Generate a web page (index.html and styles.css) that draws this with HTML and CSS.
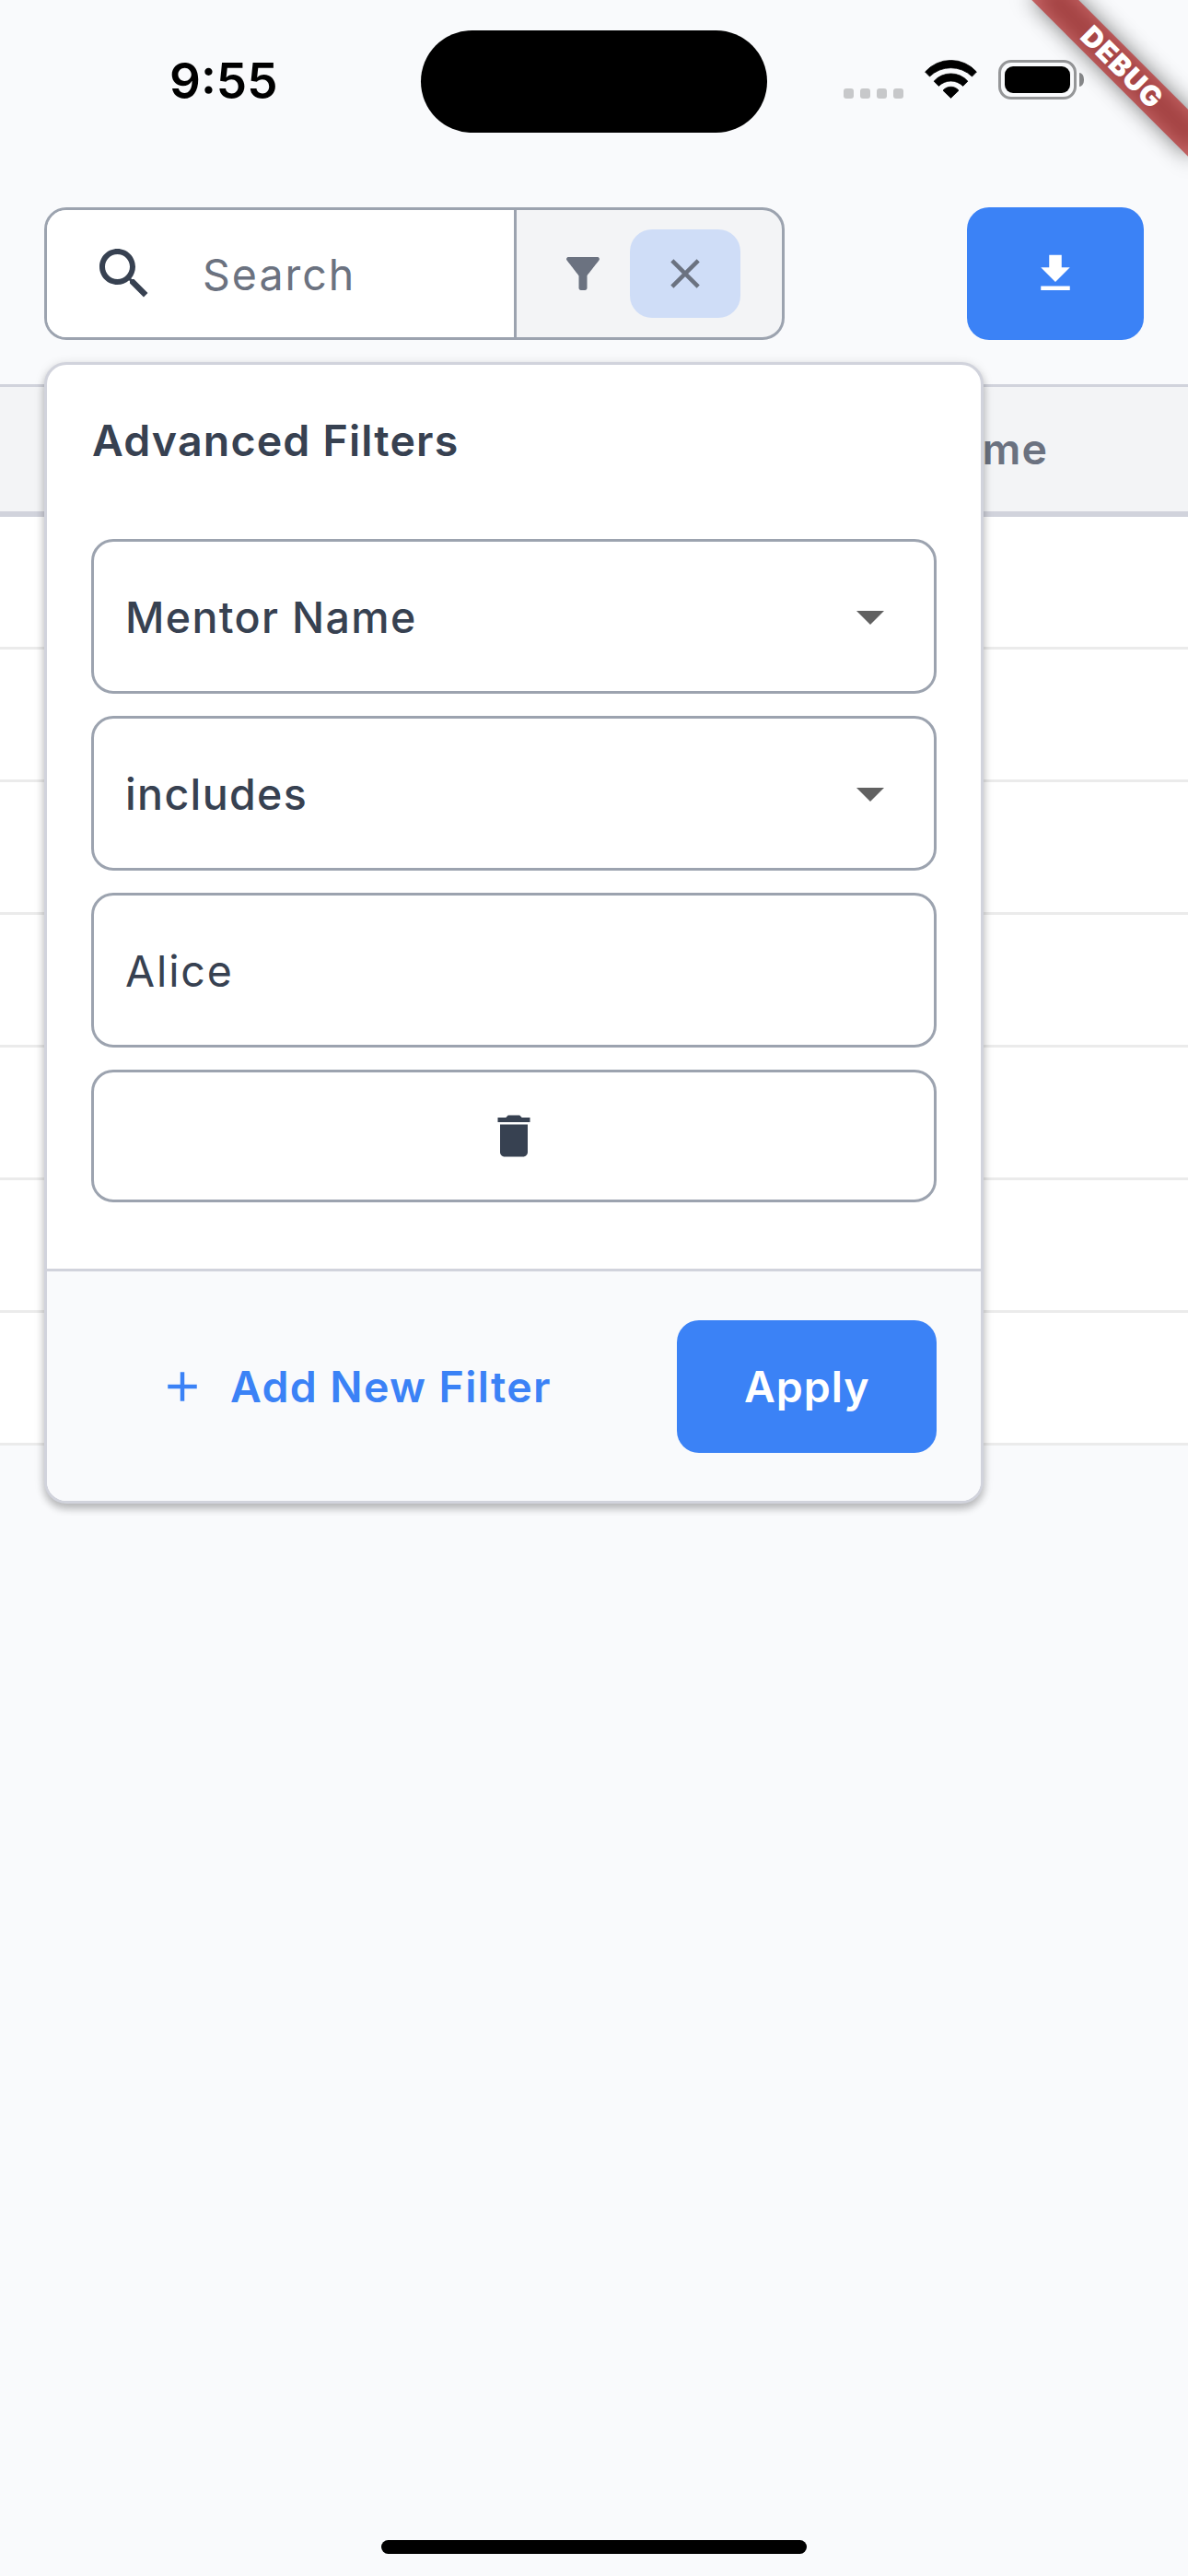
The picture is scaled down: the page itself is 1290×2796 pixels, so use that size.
FILE: index.html
```
<!DOCTYPE html>
<html lang="en">
<head>
<meta charset="utf-8">
<title>Mentors</title>
<link rel="stylesheet" href="styles.css">
</head>
<body>
<div class="screen">
  <header class="status-bar">
    <div class="clock">9:55</div>
    <div class="island"></div>
    <div class="indicators">
      <div class="signal"><i></i><i></i><i></i><i></i></div>
      <svg class="wifi" viewBox="0 0 57 42">
        <path d="M.6 13A37.3 37.3 0 0 1 56.4 13L51.5 18A33 33 0 0 0 5.5 18Z"/>
        <path d="M10.1 23.2A24.6 24.6 0 0 1 46.9 23.2L41.7 28.4A18.8 18.8 0 0 0 15.3 28.4Z"/>
        <path d="M20 33.2A11.1 11.1 0 0 1 37 33.2L28.5 41.4Z"/>
      </svg>
      <div class="battery"><div class="battery-case"><div class="battery-fill"></div></div><div class="battery-tip"></div></div>
    </div>
  </header>

  <div class="toolbar">
    <div class="search">
      <div class="search-input">
        <svg class="icon-lg" viewBox="0 0 24 24"><path d="M15.5 14h-.79l-.28-.27C15.41 12.59 16 11.11 16 9.5 16 5.91 13.09 3 9.5 3S3 5.91 3 9.5 5.91 16 9.5 16c1.61 0 3.09-.59 4.23-1.57l.27.28v.79l5 4.99L20.49 19l-4.99-5zm-6 0C7.01 14 5 11.99 5 9.5S7.01 5 9.5 5 14 7.01 14 9.5 11.99 14 9.5 14z"/></svg>
        <span class="placeholder">Search</span>
      </div>
      <div class="search-actions">
        <svg class="icon-md" viewBox="0 0 24 24"><path d="M4.25 5.61C6.27 8.2 10 13 10 13v6c0 .55.45 1 1 1h2c.55 0 1-.45 1-1v-6s3.72-4.8 5.74-7.39C20.25 4.95 19.78 4 18.95 4H5.04c-.83 0-1.3.95-.79 1.61z"/></svg>
        <div class="clear-chip">
          <svg class="icon-md" viewBox="0 0 24 24"><path d="M19 6.41L17.59 5 12 10.59 6.41 5 5 6.41 10.59 12 5 17.59 6.41 19 12 13.41 17.59 19 19 17.59 13.41 12z"/></svg>
        </div>
      </div>
    </div>
    <div class="download">
      <svg class="icon-md" viewBox="0 0 24 24"><path d="M19 9h-4V3H9v6H5l7 7 7-7zM5 18v2h14v-2H5z"/></svg>
    </div>
  </div>

  <div class="table">
    <div class="table-head">me</div>
    <div class="row"></div>
    <div class="row"></div>
    <div class="row"></div>
    <div class="row"></div>
    <div class="row"></div>
    <div class="row"></div>
    <div class="row"></div>
  </div>

  <section class="filters">
    <div class="filters-body">
      <h2 class="filters-title">Advanced Filters</h2>
      <div class="field">
        <span class="value">Mentor Name</span>
        <svg class="icon-lg caret" viewBox="0 0 24 24"><path d="M7 10l5 5 5-5z"/></svg>
      </div>
      <div class="field">
        <span class="value">includes</span>
        <svg class="icon-lg caret" viewBox="0 0 24 24"><path d="M7 10l5 5 5-5z"/></svg>
      </div>
      <div class="field">
        <span class="value value-text">Alice</span>
      </div>
      <div class="field field-delete">
        <svg class="icon-trash" viewBox="0 0 24 24"><path d="M6 19c0 1.1.9 2 2 2h8c1.1 0 2-.9 2-2V7H6v12zM19 4h-3.5l-1-1h-5l-1 1H5v2h14V4z"/></svg>
      </div>
    </div>
    <div class="filters-footer">
      <div class="add">
        <svg class="icon-md" viewBox="0 0 24 24"><path d="M19 13h-6v6h-2v-6H5v-2h6V5h2v6h6v2z"/></svg>
        <span>Add New Filter</span>
      </div>
      <div class="apply">Apply</div>
    </div>
  </section>

  <div class="ribbon"><div class="ribbon-band">DEBUG</div></div>
  <div class="home-indicator"></div>
</div>
</body>
</html>
```
FILE: styles.css
```
* { box-sizing: border-box; }

body {
  margin: 0;
  background: #f9fafb;
}

.screen {
  position: relative;
  display: flex;
  flex-direction: column;
  width: 1290px;
  height: 2796px;
  overflow: hidden;
  background: #f9fafc;
  color: #374151;
  font-family: Inter, "Liberation Sans", sans-serif;
  font-size: 46.5px;
  line-height: 60px;
}

svg { display: block; flex: none; fill: currentColor; }
.icon-lg { width: 72px; height: 72px; }
.icon-md { width: 54px; height: 54px; }
.icon-trash { width: 60px; height: 60px; }

/* Status bar */
.status-bar {
  display: grid;
  grid-template-columns: 457px 376px 457px;
  height: 177px;
  padding-top: 33px;
  color: #000;
}

.clock {
  padding-left: 184px;
  font-size: 53px;
  font-weight: 600;
  line-height: 111px;
}

.island {
  height: 111px;
  border-radius: 56px;
  background: #000;
}

.indicators {
  display: flex;
  height: 43px;
  margin-top: 32px;
  padding-left: 83px;
}

.signal {
  display: flex;
  gap: 7px;
  align-items: flex-end;
  width: 88px;
  height: 42px;
}

.signal i {
  width: 11px;
  height: 11px;
  border-radius: 3px;
  background: #c7c8ca;
}

.wifi { width: 57px; height: 42px; margin-right: 23px; }
.wifi path { stroke: #000; stroke-width: .8; stroke-linejoin: round; }

.battery { display: flex; gap: 3px; align-items: center; }

.battery-case {
  width: 85px;
  height: 43px;
  padding: 4px;
  border: 3px solid #959698;
  border-radius: 14px;
}

.battery-fill { height: 29px; border-radius: 9px; background: #000; }

.battery-tip {
  width: 5px;
  height: 15px;
  border-radius: 0 5px 5px 0 / 0 7px 7px 0;
  background: #868789;
}

/* Search and actions */
.toolbar {
  display: flex;
  justify-content: space-between;
  padding: 48px;
}

.search {
  display: flex;
  width: 804px;
  height: 144px;
  border: 3px solid #9ca3af;
  border-radius: 24px;
  overflow: hidden;
  background: #f3f4f6;
}

.search-input {
  display: flex;
  align-items: center;
  width: 510px;
  padding-left: 48px;
  border-right: 3px solid #9ca3af;
  background: #fff;
}

.placeholder {
  padding: 2px 0 0 49px;
  color: #6b7280;
  letter-spacing: 2px;
}

.search-actions {
  display: flex;
  flex: 1;
  align-items: center;
  gap: 24px;
  padding-left: 45px;
  color: #6b7280;
}

.clear-chip {
  display: flex;
  align-items: center;
  justify-content: center;
  width: 120px;
  height: 96px;
  border-radius: 24px;
  background: #cfddf7;
}

.download {
  display: flex;
  align-items: center;
  justify-content: center;
  width: 192px;
  height: 144px;
  border-radius: 24px;
  background: #3b82f6;
  color: #fff;
}

/* Table */
.table-head {
  height: 144px;
  padding-left: 1066.5px;
  border-top: 3px solid #d1d3dc;
  border-bottom: 6px solid #d1d3dc;
  background: #f3f4f6;
  color: #6b7280;
  font-weight: 600;
  line-height: 134px;
  letter-spacing: 1.2px;
}

.row {
  height: 144px;
  border-bottom: 3px solid #ebebeb;
  background: #fff;
}

/* Filter popover */
.filters {
  position: absolute;
  top: 393px;
  left: 48px;
  width: 1020px;
  border: 3px solid #d1d3dc;
  border-radius: 24px;
  background: #fff;
  box-shadow: 0 6px 9px rgba(0, 0, 0, .2), 0 2px 12px rgba(0, 0, 0, .13);
}

.filters-body {
  display: flex;
  flex-direction: column;
  gap: 24px;
  height: 981px;
  padding: 52px 48px 0;
}

.filters-title {
  height: 113px;
  margin: 0;
  padding-left: 1px;
  font-size: 46.5px;
  font-weight: 600;
  letter-spacing: 1.17px;
}

.field {
  display: flex;
  align-items: center;
  justify-content: space-between;
  height: 168px;
  padding: 0 33px 0 34px;
  border: 3px solid #9ca3af;
  border-radius: 24px;
}

.value {
  padding-top: 2px;
  font-weight: 500;
  letter-spacing: 1.35px;
}

.value-text { font-weight: 400; letter-spacing: 1.9px; }

.caret { color: #616161; }

.field-delete { justify-content: center; height: 144px; padding: 0; }

.filters-footer {
  display: flex;
  align-items: center;
  justify-content: space-between;
  height: 252px;
  padding: 0 48px 0 120px;
  border-top: 3px solid #d1d3dc;
  border-radius: 0 0 21px 21px;
  background: #f9fafc;
  font-weight: 600;
}

.add {
  display: flex;
  align-items: center;
  gap: 25px;
  color: #3b82f6;
  letter-spacing: 1.35px;
}

.apply {
  width: 282px;
  height: 144px;
  padding-left: 73px;
  border-radius: 24px;
  background: #3b82f6;
  color: #fff;
  line-height: 144px;
  letter-spacing: .95px;
}

/* Corner ribbon */
.ribbon {
  position: absolute;
  top: 0;
  left: 1290px;
  width: 0;
  height: 0;
  transform: rotate(45deg);
}

.ribbon-band {
  position: absolute;
  top: 84px;
  left: -120px;
  width: 240px;
  height: 36px;
  padding-left: 2px;
  background: rgba(183, 28, 28, .627);
  color: #fff;
  font-size: 30.6px;
  font-weight: 900;
  line-height: 36px;
  text-align: center;
  letter-spacing: 1px;
}

.ribbon-band::before {
  content: "";
  position: absolute;
  inset: 0;
  z-index: -1;
  background: rgba(0, 0, 0, .5);
  filter: blur(11.9px);
}

.home-indicator {
  width: 462px;
  height: 15px;
  margin: auto auto 24px;
  border-radius: 8px;
  background: #000;
}
```
